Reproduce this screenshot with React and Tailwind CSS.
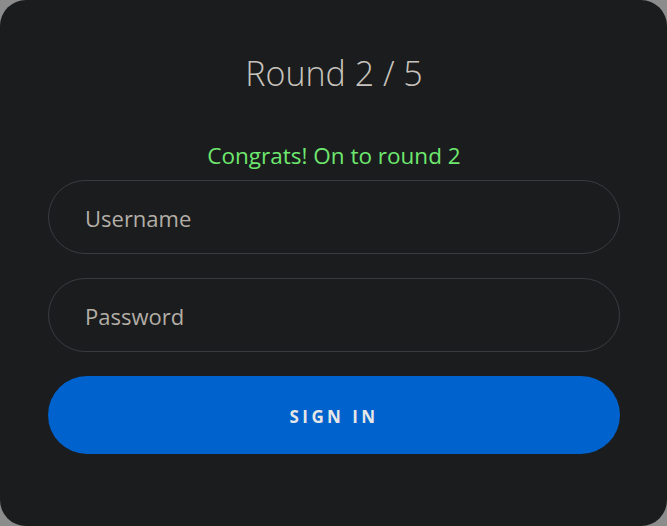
import React from "react";

function Field({ placeholder, type = "text" }) {
  return (
    <input
      type={type}
      placeholder={placeholder}
      className="h-[74px] w-full rounded-full border border-[#3a3b3e] bg-transparent px-[36px] pt-[2px] text-[22px] text-[#c9c5bd] placeholder:text-[#b3aea6] outline-none"
    />
  );
}

export default function App() {
  return (
    <div className="h-[526px] w-[667px] bg-[#8c8c8c]" style={{ fontFamily: '"Open Sans", "Noto Sans", sans-serif' }}>
      <div className="flex h-full w-full flex-col rounded-[26px] bg-[#1b1c1e] pl-[48px] pr-[47px]">
        <h1 className="mt-[50px] h-[46px] text-center text-[34px] font-light leading-[46px] text-[#c8c4bd]">
          Round 2 / 5
        </h1>
        <p className="mt-[46px] h-[28px] text-center text-[22.5px] leading-[28px] text-[#6ee86e]">
          Congrats! On to round 2
        </p>
        <div className="mt-[10px] flex flex-col gap-[24px]">
          <Field placeholder="Username" />
          <Field placeholder="Password" type="password" />
          <button className="h-[78px] w-full rounded-full bg-[#0062cc] pt-[3px] text-[17px] font-bold tracking-[0.2em] text-[#e6e6e6]">
            SIGN IN
          </button>
        </div>
      </div>
    </div>
  );
}
